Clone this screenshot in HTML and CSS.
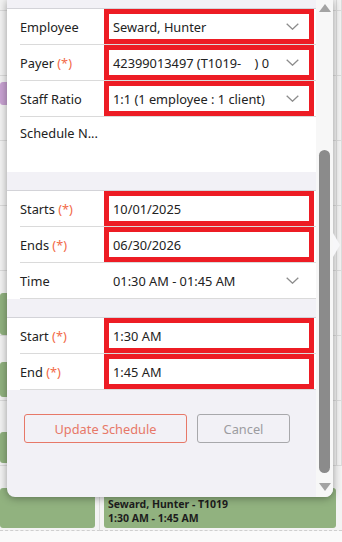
FILE: index.html
```html
<!doctype html>
<html lang="en">
<head>
    <meta charset="UTF-8">
    <title>Edit Schedule</title>
    <link rel="stylesheet" href="styles.css">
</head>
<body>
<div class="calendar">
    <div class="cell"></div><div class="cell"></div><div class="cell"></div>
    <div class="cell"></div><div class="cell"></div><div class="cell"></div>
    <div class="cell"><div class="event purple"></div></div><div class="cell"></div><div class="cell"></div>
    <div class="cell"></div><div class="cell"></div><div class="cell"></div>
    <div class="cell"></div><div class="cell"></div><div class="cell"></div>
    <div class="cell"><div class="event green e1"></div></div><div class="cell"></div><div class="cell"></div>
    <div class="cell"><div class="event green e2"></div></div><div class="cell"></div><div class="cell"></div>
    <div class="cell"><div class="event green e3"></div></div><div class="cell"></div><div class="cell"></div>
    <div class="cell last"><div class="event green e4"></div></div>
    <div class="cell last wide">
        <div class="event green e5">
            <span>Seward, Hunter - T1019</span>
            <span>1:30 AM - 1:45 AM</span>
        </div>
    </div>
</div>

<div class="popup">
    <div class="form">
        <div class="section">
            <div class="row">
                <div class="label">Employee</div>
                <div class="field marked">
                    <span class="value">Seward, Hunter</span>
                    <svg class="chev" width="13" height="7" viewBox="0 0 13 7"><polyline points="0.7,0.7 6.5,6.2 12.3,0.7"/></svg>
                </div>
            </div>
            <div class="row">
                <div class="label">Payer <span class="req">(*)</span></div>
                <div class="field marked">
                    <span class="value">42399013497 (T1019-&nbsp;&nbsp;&nbsp;&nbsp;) 0</span>
                    <svg class="chev" width="13" height="7" viewBox="0 0 13 7"><polyline points="0.7,0.7 6.5,6.2 12.3,0.7"/></svg>
                </div>
            </div>
            <div class="row">
                <div class="label">Staff Ratio</div>
                <div class="field marked">
                    <span class="value">1:1 (1 employee : 1 client)</span>
                    <svg class="chev" width="13" height="7" viewBox="0 0 13 7"><polyline points="0.7,0.7 6.5,6.2 12.3,0.7"/></svg>
                </div>
            </div>
            <div class="row notes">
                <div class="label">Schedule N...</div>
            </div>
        </div>

        <div class="section">
            <div class="row">
                <div class="label">Starts <span class="req">(*)</span></div>
                <div class="field marked"><span class="value">10/01/2025</span></div>
            </div>
            <div class="row">
                <div class="label">Ends <span class="req">(*)</span></div>
                <div class="field marked"><span class="value">06/30/2026</span></div>
            </div>
            <div class="row">
                <div class="label">Time</div>
                <div class="field">
                    <span class="value">01:30 AM - 01:45 AM</span>
                    <svg class="chev" width="13" height="7" viewBox="0 0 13 7"><polyline points="0.7,0.7 6.5,6.2 12.3,0.7"/></svg>
                </div>
            </div>
        </div>

        <div class="section">
            <div class="row">
                <div class="label">Start <span class="req">(*)</span></div>
                <div class="field marked"><span class="value">1:30 AM</span></div>
            </div>
            <div class="row">
                <div class="label">End <span class="req">(*)</span></div>
                <div class="field marked"><span class="value">1:45 AM</span></div>
            </div>
        </div>

        <div class="actions">
            <button class="btn update">Update Schedule</button>
            <button class="btn cancel">Cancel</button>
        </div>
    </div>
    <div class="scrollbar">
        <span class="arrow up"></span>
        <div class="track"><div class="thumb"></div></div>
        <span class="arrow down"></span>
    </div>
    <span class="pointer"></span>
</div>
</body>
</html>
```

FILE: styles.css
```css
*{margin:0;padding:0;box-sizing:border-box;}
html,body{
    width:342px;
    height:542px;
    overflow:hidden;
    background:#fafafa;
    font-family:"Noto Sans","Open Sans",sans-serif;
    color:#222;
}

/* calendar behind the popup */
.calendar{
    display:grid;
    grid-template-columns:100px 237px 1fr;
    grid-auto-rows:65px;
    margin-top:-54px;
    background:#f3f3f3;
}
.calendar .cell{
    border-bottom:1px solid #dcdcdc;
    border-right:1px solid #dcdcdc;
}
.calendar .cell.wide{
    grid-column:2 / 4;
    border-right:none;
}
.calendar .cell.last{
    border-bottom:1px dashed #cfcfcf;
}
.event{
    border-radius:3px;
}
.event.purple{
    background:#c8a2d2;
    height:23px;
    margin:6px 4px 0 0;
}
.event.green{
    background:#91b27f;
}
.event.e1{height:42px;margin:22px 4px 0 0;}
.event.e2{height:35px;margin:26px 4px 0 0;}
.event.e3{height:31px;margin:31px 4px 0 0;}
.event.e4{height:40px;margin:22px 4px 0 0;}
.event.e5{
    height:40px;
    margin:22px 6px 0 4px;
    display:flex;
    flex-direction:column;
    justify-content:flex-end;
    padding:0 0 3px 4px;
    font-size:10.5px;
    font-weight:700;
    line-height:14px;
    color:#1d1d1d;
}

/* popup */
.popup{
    position:absolute;
    left:7px;
    top:0;
    width:326px;
    height:497px;
    background:#f2f1f6;
    border-radius:0 0 8px 8px;
    box-shadow:0 1px 9px rgba(0,0,0,0.38);
    display:flex;
}
.form{
    flex:1;
    padding-top:8px;
}
.section{
    background:#fff;
    border-top:1px solid #d3d3d8;
    margin-bottom:18px;
}
.row{
    display:flex;
    align-items:center;
    height:36px;
    margin-left:13px;
    border-bottom:1px solid #dadada;
    font-size:12.8px;
}
.row.notes{
    height:55px;
    align-items:flex-start;
    padding-top:7px;
    border-bottom:none;
}
.label{
    width:84px;
    white-space:nowrap;
}
.req{
    color:#f26a48;
}
.field{
    flex:1;
    display:flex;
    align-items:center;
    justify-content:space-between;
    height:35px;
    padding:0 17px 0 9px;
    white-space:nowrap;
}
.field.marked{
    align-self:flex-start;
    border:5px solid #ed1c24;
    margin-right:2px;
    padding:0 10px 0 4px;
}
.chev{
    flex:none;
}
.chev polyline{
    fill:none;
    stroke:#8c8c8c;
    stroke-width:1.3;
}

.actions{
    display:flex;
    gap:10px;
    padding:6px 0 0 17px;
}
.btn{
    height:29px;
    background:transparent;
    border:1px solid #a8a8ab;
    border-radius:3px;
    font-family:inherit;
    font-size:12.8px;
    color:#9c9ca0;
}
.btn.update{
    width:163px;
    border-color:#e77868;
    color:#e77868;
}
.btn.cancel{
    width:93px;
}

/* scrollbar */
.scrollbar{
    width:17px;
    background:#f7f7f7;
    display:flex;
    flex-direction:column;
    align-items:center;
    border-radius:0 0 8px 0;
}
.arrow{
    width:0;
    height:0;
    border-left:6px solid transparent;
    border-right:6px solid transparent;
}
.arrow.up{
    margin-top:4px;
    border-bottom:8px solid #a3a3a3;
}
.arrow.down{
    margin:6px 0 6px;
    border-top:8px solid #a3a3a3;
}
.track{
    flex:1;
    width:100%;
    display:flex;
    justify-content:center;
}
.thumb{
    width:11px;
    height:323px;
    margin-top:138px;
    background:#8b8b8b;
    border-radius:6px;
}
.pointer{
    position:absolute;
    right:-7px;
    top:233px;
    width:0;
    height:0;
    border-top:12px solid transparent;
    border-bottom:12px solid transparent;
    border-left:7px solid #f7f7f9;
}
```
